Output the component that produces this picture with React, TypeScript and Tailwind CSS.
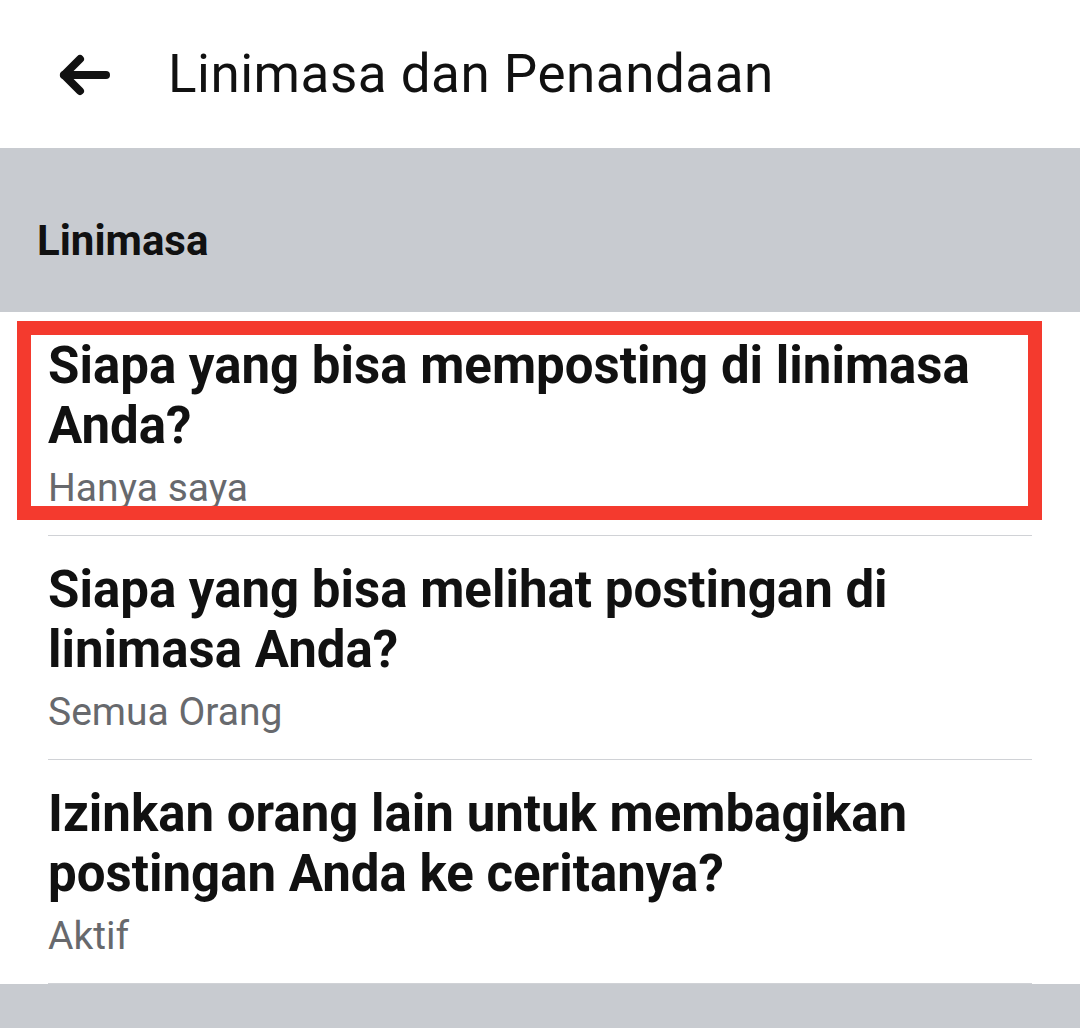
const items = [
  { title: "Siapa yang bisa memposting di linimasa Anda?", value: "Hanya saya", highlight: true },
  { title: "Siapa yang bisa melihat postingan di linimasa Anda?", value: "Semua Orang" },
  { title: "Izinkan orang lain untuk membagikan postingan Anda ke ceritanya?", value: "Aktif" },
];

export default function App() {
  return (
    <div className="w-[1080px] h-[1028px] overflow-hidden bg-white font-['Roboto',sans-serif] text-[#111111]">
      {/* top bar */}
      <div className="h-[148px] flex items-center">
        <div className="w-[168px] pl-[58px] pt-[2px]">
          <svg width="52" height="42" viewBox="0 0 52 42" fill="none" stroke="#111111" strokeWidth="8" strokeLinecap="round" strokeLinejoin="round">
            <path d="M6 21H48" />
            <path d="M22 5L6 21L22 37" />
          </svg>
        </div>
        <h1 className="text-[53px] leading-none font-normal tracking-[0.5px]">Linimasa dan Penandaan</h1>
      </div>

      {/* section header */}
      <div className="h-[164px] bg-[#c8cbd0] flex items-center px-[37px] pt-[22px]">
        <h2 className="text-[42px] leading-none font-bold">Linimasa</h2>
      </div>

      {/* list */}
      <div>
        {items.map((item) => (
          <div key={item.title} className="relative h-[224px] px-[48px]">
            <div className="h-full pt-[24px] border-b border-[#d0d2d6]">
              <p className="text-[51px] leading-[60px] font-bold pr-[40px]">{item.title}</p>
              <p className="mt-[10px] text-[39px] leading-[44px] text-[#67696d]">{item.value}</p>
            </div>
            {item.highlight && (
              <div className="absolute left-[17px] top-[9px] w-[1025px] h-[199px] border-[14px] border-[#f43a2e]" />
            )}
          </div>
        ))}
      </div>

      <div className="h-[100px] bg-[#c8cbd0]" />
    </div>
  );
}
